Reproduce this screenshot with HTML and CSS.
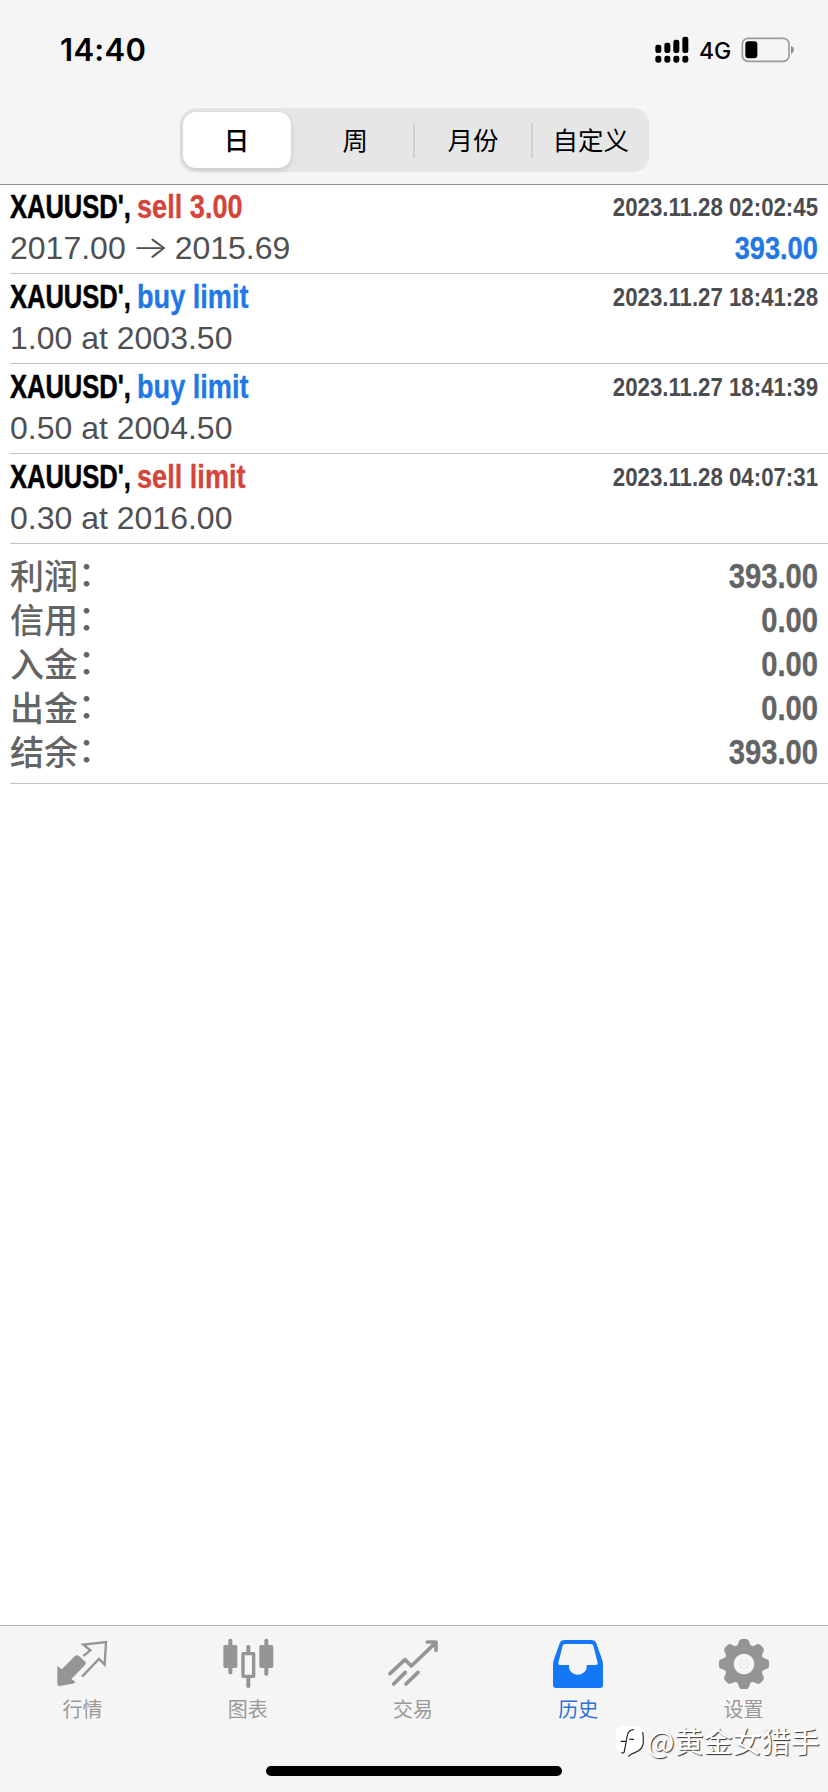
FILE: index.html
```html
<!DOCTYPE html>
<html lang="zh-CN">
<head>
<meta charset="utf-8">
<title>历史</title>
<link rel="stylesheet" href="styles.css">
</head>
<body>
<div class="app">
  <header class="header">
    <div class="status">
      <span class="time">14:40</span>
      <div class="indicators">
        <svg class="signal" width="34" height="28" viewBox="0 0 102 84">
          <rect x="1" y="26" width="18" height="25" rx="7"/><rect x="28" y="20" width="18" height="31" rx="7"/><rect x="55" y="11" width="18" height="40" rx="7"/><rect x="82" y="2" width="18" height="49" rx="7"/>
          <rect x="1" y="59" width="18" height="21" rx="7"/><rect x="28" y="59" width="18" height="21" rx="7"/><rect x="55" y="59" width="18" height="21" rx="7"/><rect x="82" y="59" width="18" height="21" rx="7"/>
        </svg>
        <span class="network">4G</span>
        <svg class="battery" width="54" height="26" viewBox="0 0 162 78">
          <rect x="4" y="4" width="140" height="69" rx="17" fill="none" stroke="#9b9b9b" stroke-width="5"/>
          <rect x="13" y="13" width="36" height="51" rx="9"/>
          <path d="M150 27Q159 31 159 38.500T150 51Z" fill="#8e8e8e"/>
        </svg>
      </div>
    </div>
    <nav class="segments">
      <span class="segment active">日</span>
      <span class="segment">周</span>
      <span class="segment divided">月份</span>
      <span class="segment divided">自定义</span>
    </nav>
  </header>

  <main class="history">
    <article class="deal">
      <div class="line"><span class="symbol"><b>XAUUSD',</b></span><b class="action sell">sell 3.00</b><time class="date">2023.11.28 02:02:45</time></div>
      <div class="line detail"><span>2017.00</span><span class="arrow">→</span><span>2015.69</span><b class="profit">393.00</b></div>
    </article>
    <article class="deal">
      <div class="line"><span class="symbol"><b>XAUUSD',</b></span><b class="action buy">buy limit</b><time class="date">2023.11.27 18:41:28</time></div>
      <div class="line detail"><span>1.00 at 2003.50</span></div>
    </article>
    <article class="deal">
      <div class="line"><span class="symbol"><b>XAUUSD',</b></span><b class="action buy">buy limit</b><time class="date">2023.11.27 18:41:39</time></div>
      <div class="line detail"><span>0.50 at 2004.50</span></div>
    </article>
    <article class="deal">
      <div class="line"><span class="symbol"><b>XAUUSD',</b></span><b class="action sell">sell limit</b><time class="date">2023.11.28 04:07:31</time></div>
      <div class="line detail"><span>0.30 at 2016.00</span></div>
    </article>
    <section class="totals">
      <div class="total"><span class="label">利润<i>：</i></span><b class="amount">393.00</b></div>
      <div class="total"><span class="label">信用<i>：</i></span><b class="amount">0.00</b></div>
      <div class="total"><span class="label">入金<i>：</i></span><b class="amount">0.00</b></div>
      <div class="total"><span class="label">出金<i>：</i></span><b class="amount">0.00</b></div>
      <div class="total"><span class="label">结余<i>：</i></span><b class="amount">393.00</b></div>
    </section>
  </main>

  <footer class="footer">
    <nav class="tabs">
      <div class="tab">
        <svg class="icon" viewBox="167 78 162 162">
          <path d="M171 167L184 178L224 138Q230 133 236 138L255 155Q259 160 254 165L213 207L226 216Q222 221 213 222L178 228Q171 228 171 221Z" fill="#959595"/>
          <path d="M249 138L270 121L249 104L317 96L313 164L296 147L245 200" fill="none" stroke="#959595" stroke-width="7"/>
        </svg>
        <span>行情</span>
      </div>
      <div class="tab">
        <svg class="icon" viewBox="662 78 162 162" fill="#959595">
          <rect x="669" y="105" width="42" height="69" rx="5"/><rect x="684" y="86" width="12" height="107" rx="5"/>
          <rect x="777" y="105" width="42" height="69" rx="5"/><rect x="792" y="86" width="12" height="111" rx="5"/>
          <rect x="738" y="105" width="12" height="129" rx="5"/><rect x="728" y="131" width="32" height="68" fill="#f6f6f6" stroke="#959595" stroke-width="10" stroke-linejoin="round"/>
        </svg>
        <span>图表</span>
      </div>
      <div class="tab">
        <svg class="icon" viewBox="78 78 162 162" fill="none" stroke="#959595" stroke-width="11" stroke-linecap="round" stroke-linejoin="round">
          <path d="M90 191L135 149L154 168L228 97M202 96H228V121M101 222L136 187M138 222L174 187"/>
        </svg>
        <span>交易</span>
      </div>
      <div class="tab current">
        <svg class="icon" viewBox="573 78 162 162">
          <path fill="#1478f6" fill-rule="evenodd" d="M614 90H694Q705 90 709 100L727 151Q729 157 729 164V225Q729 234 720 234H588Q579 234 579 225V164Q579 157 581 151L599 100Q603 90 614 90ZM615 102Q610 102 608 107L595 158Q594 165 600 165H627V174A27 25 0 0 0 680 174V165H707Q714 165 713 159L700 107Q698 102 692 102Z"/>
        </svg>
        <span>历史</span>
      </div>
      <div class="tab">
        <svg class="icon" viewBox="378 78 162 162">
          <g fill="#959595">
            <circle cx="462" cy="162" r="59"/>
            <g id="teeth"><path id="tooth" d="M437 112Q444 106 446 97Q449 87 456 87H468Q475 87 478 97Q480 106 487 112Z"/>
            <use href="#tooth" transform="rotate(45 462 162)"/><use href="#tooth" transform="rotate(90 462 162)"/><use href="#tooth" transform="rotate(135 462 162)"/></g>
            <use href="#teeth" transform="rotate(180 462 162)"/>
          </g>
          <circle cx="462" cy="162" r="31" fill="#f6f6f6"/>
          <circle cx="462" cy="162" r="14" fill="none" stroke="#ececec" stroke-width="3"/>
        </svg>
        <span>设置</span>
      </div>
    </nav>
    <div class="home-indicator"></div>
    <div class="watermark">
      <svg width="32" height="36" viewBox="0 0 96 108">
        <path d="M24 6H70Q89 6 89 26V56Q87 77 66 84L48 98V84H24Q5 84 5 62V26Q5 6 24 6Z" fill="#fff"/>
        <path d="M20 52H35M60 17Q44 17 40 34L31 82Q30 89 22 86M46 46H60M86 24Q88 34 88 56Q86 78 64 85Q49 90 43 98" fill="none" stroke="#222" stroke-width="3.500"/>
      </svg>
      <span>@黄金女猎手</span>
    </div>
  </footer>
</div>
</body>
</html>
```
FILE: styles.css
```css
* { box-sizing: border-box; }
body { margin: 0; background: #fff; font-family: "Liberation Sans", "Noto Sans CJK SC", sans-serif; }
.app { width: 828px; height: 1792px; display: flex; flex-direction: column; overflow: hidden; }
.header { height: 185px; flex: none; background: #f5f5f5; border-bottom: 1px solid #8c8c8c; display: flex; flex-direction: column; align-items: center; }
.status { width: 100%; height: 108px; padding: 30px 33px 38px 60px; display: flex; justify-content: space-between; align-items: center; font-family: Inter, sans-serif; }
.time { font-size: 31px; font-weight: 600; letter-spacing: .3px; line-height: 40px; }
.indicators { display: flex; align-items: center; }
.network { font-size: 23px; font-weight: 500; line-height: 28px; width: 31px; margin: 2px 11px 0 10px; white-space: nowrap; }
.segments { width: 469px; height: 64px; padding: 4px 0 4px 3px; border-radius: 16px; background: #e6e6e6; display: flex; align-items: center; }
.segment { flex: 1; height: 35px; display: flex; align-items: center; justify-content: center; font: 400 25.500px/35px "Noto Sans CJK SC", sans-serif; padding-bottom: 3px; }
.segment.active { flex: none; width: 108px; height: 56px; margin-right: 7px; background: #fff; border-radius: 13px; font-weight: 500; box-shadow: 0 2px 6px rgba(0,0,0,.14); }
.divided { border-left: 2px solid #d0d0d0; }

.history { flex: 1; padding-left: 10px; }
.deal { height: 90px; padding: 3px 10px 0 0; border-bottom: 1px solid #c2c2c2; }
.deal:first-child { height: 89px; padding-top: 2px; }
.line { height: 41px; display: flex; align-items: center; white-space: nowrap; font-size: 32.500px; line-height: 41px; }
.symbol { width: 127px; flex: none; color: #000; }
.symbol b { display: inline-block; transform: scaleX(.785); transform-origin: left; -webkit-text-stroke: .5px currentColor; }
.action { transform: scaleX(.835); transform-origin: left; -webkit-text-stroke: .3px currentColor; }
.sell { color: #d3443a; }
.buy { color: #2277e6; }
.date { margin-left: auto; flex: none; font-size: 26px; font-weight: 700; color: #4b4c4f; transform: scaleX(.855); transform-origin: right; }
.detail { font-size: 32px; color: #4f5052; }
.arrow { width: 49px; display: flex; justify-content: center; font: 300 30px/38px Inter, sans-serif; padding-bottom: 3px; transform: scaleX(1.32); }
.profit { margin-left: auto; color: #2277e6; transform: scaleX(.85); transform-origin: right; -webkit-text-stroke: .3px currentColor; }
.totals { height: 240px; padding: 10px 10px 0 0; border-bottom: 1px solid #c2c2c2; color: #646464; }
.total { height: 44px; display: flex; align-items: center; justify-content: space-between; }
.label { height: 46px; font: 500 34px/44px "Noto Sans CJK SC", sans-serif; }
.label i { display: inline-block; font-style: normal; transform: translateY(-3px); }
.amount { font-size: 35px; line-height: 44px; transform: scaleX(.835); transform-origin: right; -webkit-text-stroke: .3px currentColor; }

.footer { position: relative; flex: none; height: 167px; background: #f5f5f5; border-top: 1px solid #b4b4b4; display: flex; flex-direction: column; align-items: center; }
.tabs { width: 828px; height: 140px; padding: 10px 2px 0 0; display: flex; }
.tab { flex: 1; display: flex; flex-direction: column; align-items: center; color: #999; font: 400 20px/28px "Noto Sans CJK SC", sans-serif; }
.tab.current { color: #2b72d8; }
.icon { width: 54px; height: 54px; margin-bottom: 5px; }
.home-indicator { width: 296px; height: 10px; border-radius: 5px; background: #000; }
.watermark { position: absolute; left: 614px; top: 93px; display: flex; align-items: center; color: #fff; font: 400 29px/40px "Noto Sans CJK SC", sans-serif; text-shadow: 1px 1px 1px #333; white-space: nowrap; }
.watermark svg { margin-top: 5px; }
.watermark span { margin-left: 1px; }
```
